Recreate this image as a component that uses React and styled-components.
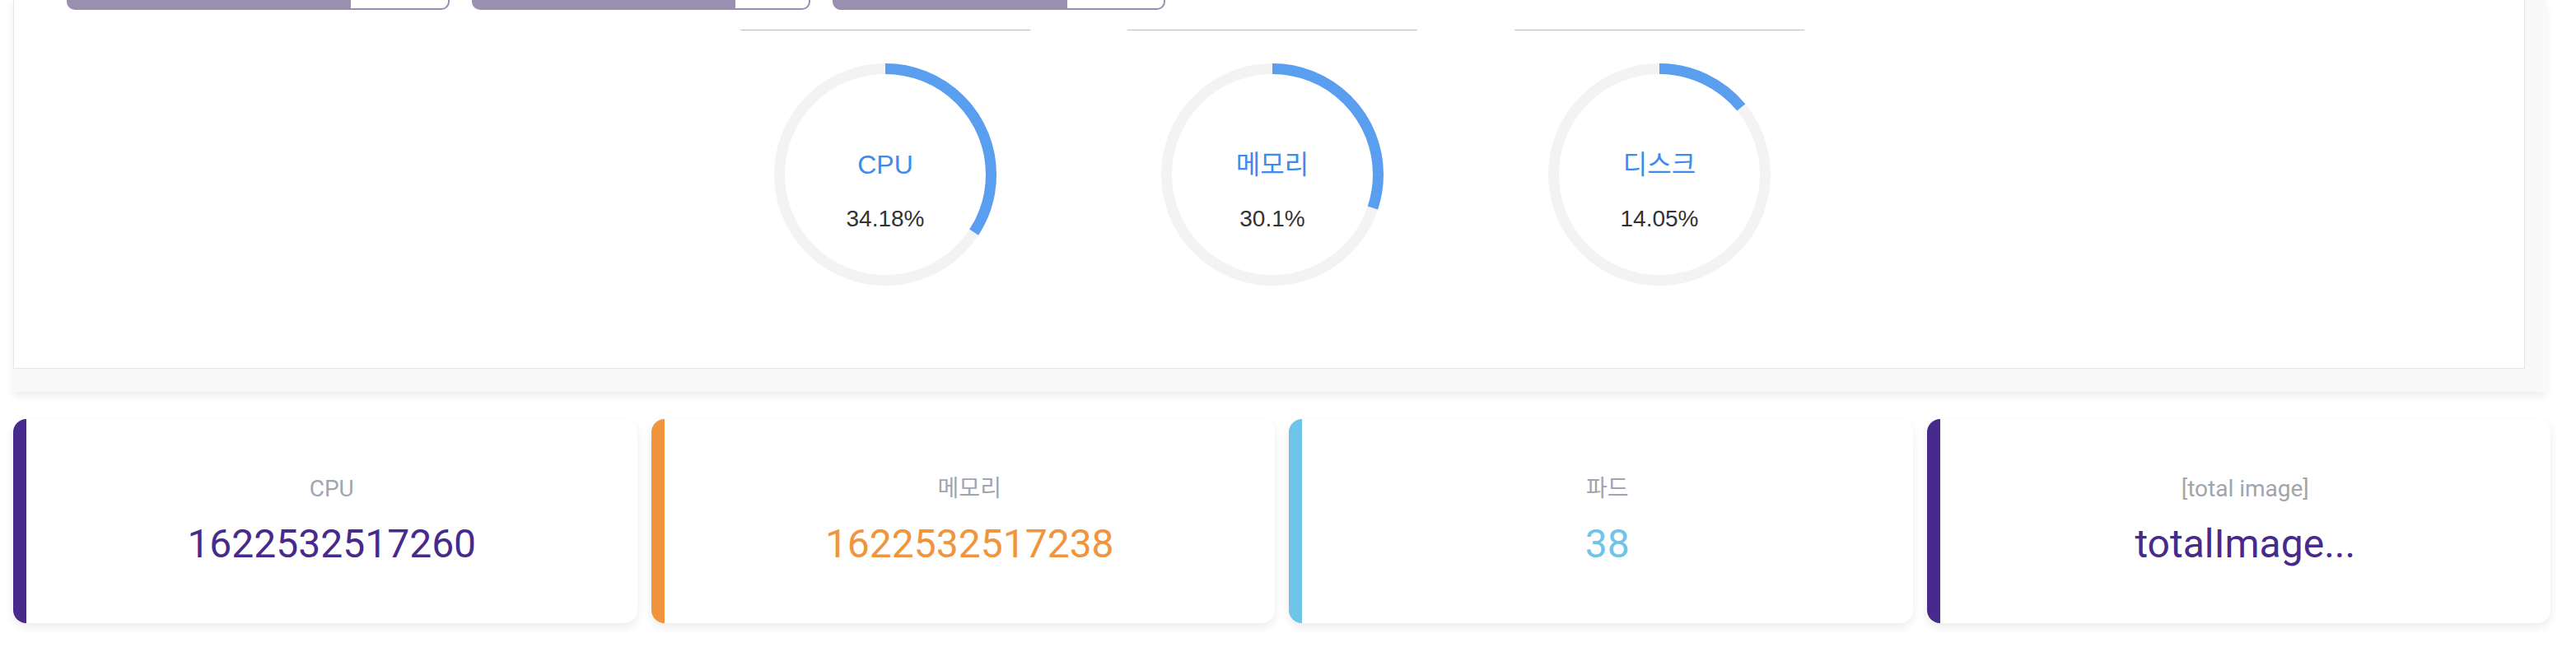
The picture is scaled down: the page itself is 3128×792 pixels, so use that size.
import React from "react";
import styled, { createGlobalStyle } from "styled-components";

const GlobalStyle = createGlobalStyle`
  html, body {
    margin: 0;
    padding: 0;
    background: #ffffff;
  }
  body {
    font-family: Roboto, "Noto Sans CJK KR", sans-serif;
    overflow: hidden;
  }
`;

const Page = styled.div`
  width: 3128px;
  height: 792px;
  background: #ffffff;
`;

const Panel = styled.section`
  margin-left: 16px;
  width: 3076px;
  box-sizing: border-box;
  padding: 0 26px 28px 0;
  background: #f9f9f9;
  box-shadow: 0 5px 9px rgba(0, 0, 0, 0.07);
`;

const Inner = styled.div`
  background: #ffffff;
  border: 1px solid #e6e6e6;
  border-top: none;
  padding: 0 0 100px 64px;
`;

const BarRow = styled.div`
  display: flex;
  gap: 27px;
  height: 12px;
`;

const Bar = styled.div`
  display: flex;
  width: ${(p) => p.$width}px;
  height: 12px;
`;

const BarFill = styled.div`
  width: ${(p) => p.$width}px;
  background: #998fb0;
  border-bottom-left-radius: 10px;
`;

const BarRest = styled.div`
  flex: 1;
  box-sizing: border-box;
  background: #ffffff;
  border: 2px solid #998fb0;
  border-top: none;
  border-left: none;
  border-bottom-right-radius: 10px;
`;

const GaugeRow = styled.div`
  display: flex;
  justify-content: center;
  gap: 118px;
  margin-top: 24px;
  margin-left: -56px;
`;

const GaugeColumn = styled.div`
  width: 352px;
  border-top: 1px solid #bcbcbc;
  display: flex;
  justify-content: center;
  padding-top: 40px;
`;

const Gauge = styled.div`
  display: grid;
  width: 270px;
  height: 270px;

  & > * {
    grid-area: 1 / 1;
  }
`;

const GaugeText = styled.div`
  display: flex;
  flex-direction: column;
  align-items: center;
  padding-top: 105px;
  gap: 32px;
  font-family: "Liberation Sans", Arial, "Noto Sans CJK KR", sans-serif;
`;

const GaugeLabel = styled.div`
  font-size: 32px;
  line-height: 36px;
  color: #3d8bea;
`;

const GaugeValue = styled.div`
  font-size: 28px;
  line-height: 32px;
  color: #333333;
`;

const CardRow = styled.div`
  display: grid;
  grid-template-columns: repeat(4, 1fr);
  gap: 17px;
  width: 3081px;
  margin: 33px 0 0 16px;
`;

const Card = styled.div`
  height: 248px;
  box-sizing: border-box;
  padding-top: 69px;
  background: #ffffff;
  border-radius: 16px;
  border-left: 16px solid ${(p) => p.$color};
  box-shadow: 0 5px 12px rgba(0, 0, 0, 0.08);
  display: flex;
  flex-direction: column;
  align-items: center;
  gap: 23px;
`;

const CardLabel = styled.div`
  font-family: Roboto, "Noto Sans CJK KR", sans-serif;
  font-size: 28px;
  line-height: 32px;
  color: #a0a5b0;
`;

const CardValue = styled.div`
  font-family: Roboto, "Noto Sans CJK KR", sans-serif;
  font-size: 48px;
  line-height: 56px;
  color: ${(p) => p.$color};
`;

const bars = [
  { width: 465, fill: 345 },
  { width: 411, fill: 320 },
  { width: 404, fill: 285 },
];

const gauges = [
  { label: "CPU", value: 34.18 },
  { label: "메모리", value: 30.1 },
  { label: "디스크", value: 14.05 },
];

const cards = [
  { label: "CPU", value: "1622532517260", color: "#472a8c" },
  { label: "메모리", value: "1622532517238", color: "#f0953d" },
  { label: "파드", value: "38", color: "#6fc4e9" },
  { label: "[total image]", value: "totalImage...", color: "#472a8c" },
];

function Ring({ percent }) {
  const r = 128.5;
  const c = 2 * Math.PI * r;
  return (
    <svg width="270" height="270" viewBox="0 0 270 270">
      <circle cx="135" cy="135" r={r} fill="none" stroke="#f3f3f3" strokeWidth="13" />
      <circle
        cx="135"
        cy="135"
        r={r}
        fill="none"
        stroke="#5a9ef0"
        strokeWidth="13"
        strokeDasharray={`${(c * percent) / 100} ${c}`}
        transform="rotate(-90 135 135)"
      />
    </svg>
  );
}

export default function App() {
  return (
    <Page>
      <GlobalStyle />
      <Panel>
        <Inner>
          <BarRow>
            {bars.map((b, i) => (
              <Bar key={i} $width={b.width}>
                <BarFill $width={b.fill} />
                <BarRest />
              </Bar>
            ))}
          </BarRow>
          <GaugeRow>
            {gauges.map((g) => (
              <GaugeColumn key={g.label}>
                <Gauge>
                  <Ring percent={g.value} />
                  <GaugeText>
                    <GaugeLabel>{g.label}</GaugeLabel>
                    <GaugeValue>{g.value}%</GaugeValue>
                  </GaugeText>
                </Gauge>
              </GaugeColumn>
            ))}
          </GaugeRow>
        </Inner>
      </Panel>
      <CardRow>
        {cards.map((c) => (
          <Card key={c.label} $color={c.color}>
            <CardLabel>{c.label}</CardLabel>
            <CardValue $color={c.color}>{c.value}</CardValue>
          </Card>
        ))}
      </CardRow>
    </Page>
  );
}
